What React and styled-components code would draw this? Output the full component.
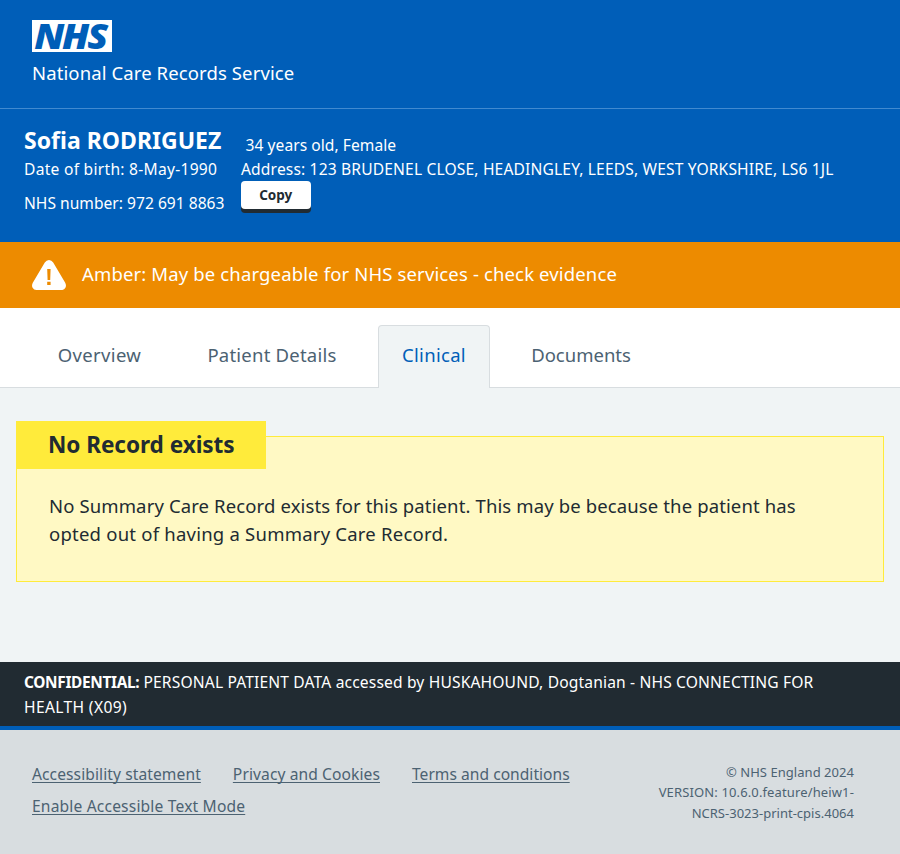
import React from "react";
import styled, { createGlobalStyle } from "styled-components";

const GlobalStyle = createGlobalStyle`
  *, *::before, *::after { box-sizing: border-box; }
  body {
    margin: 0;
    background: #f0f4f5;
    color: #212b32;
    font-family: "Noto Sans", "Open Sans", sans-serif;
    font-size: 15.6px;
    line-height: 24px;
  }
  h1, h2, p, ul { margin: 0; padding: 0; }
`;

const Page = styled.div`
  min-height: 854px;
  display: flex;
  flex-direction: column;
`;

const Tracked = styled.span`
  letter-spacing: ${(p) => p.$ls}px;
  white-space: nowrap;
`;

const Header = styled.header`
  height: 109px;
  padding: 20px 32px 0;
  background: #005eb8;
  border-bottom: 1px solid #418ad0;
  color: #fff;
`;

const Logo = styled.svg`
  display: block;
  width: 80px;
  height: 32px;
  overflow: visible;
`;

const ServiceName = styled.div`
  margin-top: 7px;
  font-size: 18.5px;
  line-height: 28px;
`;

const PatientBanner = styled.section`
  height: 133px;
  padding: 16px 24px 0;
  display: grid;
  grid-template-columns: 217px 1fr;
  background: #005eb8;
  color: #fff;
`;

const PatientColumn = styled.div`
  display: flex;
  flex-direction: column;
  align-items: flex-start;
  padding-top: ${(p) => p.$top || 0}px;
`;

const PatientName = styled.h1`
  font-size: 23px;
  line-height: 31px;
  margin-bottom: 1px;
  font-weight: 700;
`;

const Detail = styled.div`
  margin-top: ${(p) => p.$mt || 0}px;
  padding-left: ${(p) => p.$indent || 0}px;
`;

const CopyButton = styled.button`
  width: 69.5px;
  height: 28px;
  padding: 0;
  border: 0;
  border-radius: 4px;
  background: #fff;
  box-shadow: 0 4px 0 #212b32;
  color: #212b32;
  font: 700 13.5px/28px "Noto Sans", "Open Sans", sans-serif;
`;

const AmberBanner = styled.section`
  height: 66px;
  padding: 0 32px;
  display: flex;
  align-items: center;
  gap: 16px;
  background: #ed8b00;
  color: #fff;
  font-size: 18.5px;
  line-height: 28px;
`;

const WarningIcon = styled.svg`
  width: 34px;
  height: 30px;
`;

const AmberText = styled.p`
  padding-bottom: 2px;
`;

const Tabs = styled.nav`
  height: 80px;
  padding-left: 33px;
  display: flex;
  align-items: flex-end;
  gap: 16px;
  background: #fff;
  border-bottom: 1px solid #d8dde0;
`;

const Tab = styled.a`
  width: ${(p) => p.$w}px;
  height: 63px;
  margin-bottom: -1px;
  padding-top: 15px;
  border: 1px solid ${(p) => (p.$active ? "#d8dde0" : "transparent")};
  border-bottom: 0;
  border-radius: 4px 4px 0 0;
  background: ${(p) => (p.$active ? "#f0f4f5" : "transparent")};
  color: ${(p) => (p.$active ? "#005eb8" : "#4c6272")};
  font-size: 18.5px;
  line-height: 28px;
  text-align: center;
`;

const Main = styled.main`
  height: 274px;
  padding: 48px 16px 0;
`;

const Callout = styled.section`
  height: 146px;
  padding: 0 32px;
  border: 1px solid #ffeb3b;
  background: #fff9c4;
`;

const CalloutTitle = styled.h2`
  width: 250px;
  height: 48px;
  margin: -16px 0 23px -33px;
  padding-left: 32px;
  background: #ffeb3b;
  font-size: 22.6px;
  line-height: 48px;
  font-weight: 700;
`;

const CalloutText = styled.p`
  font-size: 18.5px;
  line-height: 28px;
`;

const Confidential = styled.section`
  height: 68px;
  padding: 8px 24px 0;
  background: #212b32;
  border-bottom: 4px solid #005eb8;
  color: #fff;
  b { font-weight: 700; font-size: 15.4px; }
`;

const Footer = styled.footer`
  flex: 1;
  padding: 32px 46px 0 32px;
  display: flex;
  justify-content: space-between;
  background: #d8dde0;
  color: #4c6272;
`;

const FooterLinks = styled.ul`
  width: 570px;
  display: flex;
  flex-wrap: wrap;
  align-content: flex-start;
  gap: 8px 32px;
  list-style: none;
`;

const FooterLink = styled.li`
  a {
    color: inherit;
    letter-spacing: ${(p) => p.$ls}px;
    text-decoration: underline;
    text-decoration-skip-ink: none;
    text-decoration-thickness: 1px;
    text-underline-offset: 2px;
  }
`;

const Version = styled.div`
  font-size: 13px;
  line-height: 20.4px;
  text-align: right;
`;

const links = [
  ["Accessibility statement", 0.085],
  ["Privacy and Cookies", 0.09],
  ["Terms and conditions", 0.02],
  ["Enable Accessible Text Mode", 0.17],
];

const tabs = [
  ["Overview", 133, 0.33],
  ["Patient Details", 180, 0.22],
  ["Clinical", 112, 0.3],
  ["Documents", 150, 0],
];

export default function App() {
  return (
    <>
      <GlobalStyle />
      <Page>
        <Header>
          <Logo viewBox="0 0 80 32" aria-label="NHS">
            <rect width="80" height="32" fill="#fff" />
            <text
              x="2.2 28.3 52.2"
              y="28.8"
              transform="scale(1.06 1)"
              fill="#005eb8"
              fontFamily="'Open Sans', 'Noto Sans', sans-serif"
              fontSize="36"
              fontWeight="800"
              fontStyle="italic"
            >
              NHS
            </text>
          </Logo>
          <ServiceName><Tracked $ls={0.11}>National Care Records Service</Tracked></ServiceName>
        </Header>

        <PatientBanner>
          <PatientColumn>
            <PatientName><Tracked $ls={0.02}>Sofia RODRIGUEZ</Tracked></PatientName>
            <Detail><Tracked $ls={0.27}>Date of birth: 8-May-1990</Tracked></Detail>
            <Detail $mt={10}><Tracked $ls={0.01}>NHS number: 972 691 8863</Tracked></Detail>
          </PatientColumn>
          <PatientColumn $top={8}>
            <Detail $indent={4.5}><Tracked $ls={0.05}>34 years old, Female</Tracked></Detail>
            <Detail>
              <Tracked $ls={0.153}>Address: 123 BRUDENEL CLOSE, HEADINGLEY, LEEDS, WEST YORKSHIRE, LS6 1JL</Tracked>
            </Detail>
            <CopyButton type="button">Copy</CopyButton>
          </PatientColumn>
        </PatientBanner>

        <AmberBanner>
          <WarningIcon viewBox="0 0 34 30" aria-hidden="true">
            <path
              fill="#fff"
              d="M12.800 2.600Q14.400 0 17 0t4.200 2.600L33.200 22.800Q34.600 25.400 33.400 27.800T29.600 30H4.400Q1.800 30 .6 27.800T.8 22.800Z"
            />
            <path fill="#ed8b00" d="M15.200 9h3.400l-.4 11h-2.600zM15.200 21.800h3.400V25h-3.400z" />
          </WarningIcon>
          <AmberText>
            <Tracked $ls={0.142}>Amber: May be chargeable for NHS services - check evidence</Tracked>
          </AmberText>
        </AmberBanner>

        <Tabs>
          {tabs.map(([label, w, ls]) => (
            <Tab key={label} $w={w} $active={label === "Clinical"}>
              <Tracked $ls={ls}>{label}</Tracked>
            </Tab>
          ))}
        </Tabs>

        <Main>
          <Callout>
            <CalloutTitle><Tracked $ls={-0.06}>No Record exists</Tracked></CalloutTitle>
            <CalloutText>
              <Tracked $ls={0.125}>No Summary Care Record exists for this patient. This may be because the patient has</Tracked>{" "}
              <Tracked $ls={0.225}>opted out of having a Summary Care Record.</Tracked>
            </CalloutText>
          </Callout>
        </Main>

        <Confidential>
          <b><Tracked $ls={-0.32}>CONFIDENTIAL:</Tracked></b>{" "}
          <Tracked $ls={0.153}>PERSONAL PATIENT DATA accessed by HUSKAHOUND, Dogtanian - NHS CONNECTING FOR</Tracked>{" "}
          <Tracked $ls={0.36}>HEALTH (X09)</Tracked>
        </Confidential>

        <Footer>
          <FooterLinks>
            {links.map(([label, ls]) => (
              <FooterLink key={label} $ls={ls}><a>{label}</a></FooterLink>
            ))}
          </FooterLinks>
          <Version>
            <div><Tracked $ls={0.04}>© NHS England 2024</Tracked></div>
            <div><Tracked $ls={0.13}>VERSION: 10.6.0.feature/heiw1-</Tracked></div>
            <div><Tracked $ls={0.01}>NCRS-3023-print-cpis.4064</Tracked></div>
          </Version>
        </Footer>
      </Page>
    </>
  );
}
